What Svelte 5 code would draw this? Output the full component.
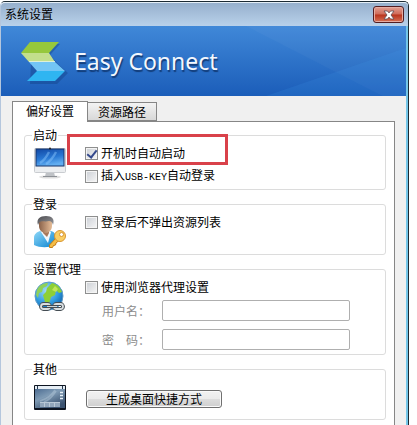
<script lang="ts">
	let tab = $state('prefs');
	let autoStart = $state(true);
	let usbLogin = $state(false);
	let hideList = $state(false);
	let useProxy = $state(false);
	let user = $state('');
	let password = $state('');
</script>

<div class="desktop">
	<main class="window">
		<header class="title-bar">
			<span>系统设置</span>
			<button class="close" aria-label="关闭">
				<svg width="12" height="10" viewBox="0 0 12 10">
					<path d="M1 1h3.4L6 2.9 7.6 1H11L8 5l3 4H7.6L6 7.1 4.4 9H1l3-4z" fill="#fff" stroke="#5e4a50" stroke-width="0.8" />
				</svg>
			</button>
		</header>

		<div class="banner">
			<svg class="rays" viewBox="0 0 405 70" preserveAspectRatio="none">
				<path d="M245 0L405 82V0z" fill="#fff" opacity="0.03" />
				<path d="M265 70L405 22V70z" fill="#4aa0f0" opacity="0.14" />
			</svg>
			<svg class="logo" width="48" height="42" viewBox="0 0 48 42">
				<path d="M12 2h28L30 13l7 8 11 10-11 11H10z" fill="#123f82" opacity="0.4" />
				<path d="M10 0h29L29 11H1z" fill="#96c83c" />
				<path d="M1 11h28l6 9H9z" fill="#c3df8c" />
				<path d="M9 20h26l10 9H17z" fill="#72c5f5" />
				<path d="M17 29h28L35 39H7z" fill="#2fb5f1" />
				<path d="M9 19.500h26" stroke="#e4f4ea" stroke-width="0.800" />
			</svg>
			<h1>Easy Connect</h1>
		</div>

		<div class="tabs" role="tablist">
			<button role="tab" class:active={tab === 'prefs'} aria-selected={tab === 'prefs'} onclick={() => (tab = 'prefs')}>偏好设置</button>
			<button role="tab" class:active={tab === 'paths'} aria-selected={tab === 'paths'} onclick={() => (tab = 'paths')}>资源路径</button>
		</div>

		<div class="panel">
			<fieldset>
				<legend>启动</legend>
				<div class="group startup">
					<svg class="icon" width="32" height="32" viewBox="0 0 32 32">
						<defs>
							<linearGradient id="screen" x1="0" y1="0" x2="0.3" y2="1">
								<stop offset="0" stop-color="#1248a4" />
								<stop offset="0.6" stop-color="#2878d4" />
								<stop offset="1" stop-color="#61adf0" />
							</linearGradient>
						</defs>
						<ellipse cx="16" cy="30" rx="11" ry="1.6" fill="#ddd" />
						<path d="M12 25h8l1 4.5H11z" fill="#bfc2c6" />
						<path d="M9 29.5h14" stroke="#8d9196" />
						<rect x="0.5" y="1.5" width="31" height="24" rx="1" fill="#eceef0" stroke="#c9ccd0" />
						<rect x="2" y="2" width="28" height="17" fill="url(#screen)" stroke="#17356b" />
						<path d="M6 16Q11 13 15 5M12 17Q18 13 22 5" stroke="#8ecaff" stroke-width="2.4" fill="none" opacity="0.45" />
						<circle cx="16" cy="1.5" r="1" fill="#222" />
					</svg>
					<div class="options">
						<label><input type="checkbox" bind:checked={autoStart} />开机时自动启动</label>
						<label><input type="checkbox" bind:checked={usbLogin} /><span>插入<span class="latin">USB-KEY</span>自动登录</span></label>
					</div>
					<div class="highlight"></div>
				</div>
			</fieldset>

			<fieldset>
				<legend>登录</legend>
				<div class="group login">
					<svg class="icon" width="32" height="32" viewBox="0 0 32 32">
						<defs>
							<linearGradient id="shirt" x1="0" y1="0" x2="1" y2="1">
								<stop offset="0" stop-color="#8fd8f8" />
								<stop offset="1" stop-color="#0a83d0" />
							</linearGradient>
							<linearGradient id="face" x1="0" y1="0" x2="1" y2="0">
								<stop offset="0" stop-color="#8a624a" />
								<stop offset="1" stop-color="#e6bd98" />
							</linearGradient>
							<linearGradient id="hair" x1="0" y1="0" x2="1" y2="1">
								<stop offset="0" stop-color="#4b4b50" />
								<stop offset="1" stop-color="#99999c" />
							</linearGradient>
						</defs>
						<path d="M0 29V22c0-4 3-6 6-7l6 3 5-3c4 1 5 4 5 8l-1 6c-6 3-15 3-21 0z" fill="url(#shirt)" />
						<path d="M7 16l5-1 5 1-3 11z" fill="#f2f7fb" />
						<path d="M9 13h6v4l-2 4-4-4z" fill="#a8785a" />
						<path d="M5 6c0-3 13-3 13 0v4c0 4-3 7-6.500 7S5 14 5 10z" fill="url(#face)" />
						<path d="M4 9C2 3 6 0 12 0s9 3 7 9c-1-3-2-4-4-4-3 1-6 0-8 .5C5 6 5 7 4 9z" fill="url(#hair)" />
						<path d="M22.500 21.500l-7 7.500v2.500h3l1-2 2-.5.5-2 3-2.500" fill="#f6bd45" stroke="#c77f16" />
						<circle cx="26" cy="20" r="5.500" fill="#fbcf63" stroke="#d99632" />
						<circle cx="27.500" cy="18.500" r="2" fill="#fff" stroke="#d99632" />
					</svg>
					<div class="options">
						<label><input type="checkbox" bind:checked={hideList} />登录后不弹出资源列表</label>
					</div>
				</div>
			</fieldset>

			<fieldset>
				<legend>设置代理</legend>
				<div class="group proxy">
					<svg class="icon" width="32" height="32" viewBox="0 0 32 32">
						<defs>
							<radialGradient id="globe" cx="0.4" cy="0.3" r="0.75">
								<stop offset="0" stop-color="#a2daf8" />
								<stop offset="0.6" stop-color="#2f9be0" />
								<stop offset="1" stop-color="#0d5aa5" />
							</radialGradient>
						</defs>
						<circle cx="15" cy="15" r="14" fill="url(#globe)" stroke="#5e9bc8" />
						<path d="M3 9C5 4 10 2 14 2l-1 3-4 2-1 4-3 1-1 5-2-3z" fill="#8fd15a" />
						<path d="M13 7l5-5c5 1 8 4 10 9l-3 1-3-3-1 5-4 2-2 7-4-2-2-7 3-3z" fill="#8ecf36" />
						<path d="M18 9l3-4 3 3-2 3z" fill="#c0e65a" />
						<g fill="none" stroke="#444c52" stroke-width="3.800">
							<rect x="7" y="23" width="9" height="5" rx="2.500" />
							<rect x="20" y="23" width="9" height="5" rx="2.500" />
						</g>
						<g fill="none" stroke="#d9dee1" stroke-width="1.800">
							<rect x="7" y="23" width="9" height="5" rx="2.500" />
							<rect x="20" y="23" width="9" height="5" rx="2.500" />
						</g>
						<path d="M13 25.500h10" stroke="#444c52" stroke-width="3" />
						<path d="M13 25.500h10" stroke="#cfd5d8" />
					</svg>
					<div class="options">
						<label><input type="checkbox" bind:checked={useProxy} />使用浏览器代理设置</label>
						<div class="field">
							<label for="user">用户名：</label>
							<input id="user" type="text" bind:value={user} disabled={!useProxy} />
						</div>
						<div class="field">
							<label for="password">密　码：</label>
							<input id="password" type="password" bind:value={password} disabled={!useProxy} />
						</div>
					</div>
				</div>
			</fieldset>

			<fieldset>
				<legend>其他</legend>
				<div class="group other">
					<svg class="icon" width="32" height="25" viewBox="0 0 32 25">
						<defs>
							<linearGradient id="desk" x1="0" y1="0" x2="0.6" y2="1">
								<stop offset="0" stop-color="#3f6088" />
								<stop offset="0.5" stop-color="#7f9bb5" />
								<stop offset="1" stop-color="#3a5270" />
							</linearGradient>
						</defs>
						<rect width="32" height="25" rx="1" fill="#0d1420" />
						<rect x="1" y="1" width="30" height="22" fill="url(#desk)" />
						<path d="M1 2.500h30" stroke="#e6eef5" stroke-width="3" />
						<path d="M3.500 1v3M28.500 1v3" stroke="#26384e" />
						<path d="M6 16C13 14 18 10 21 5M10 17c5-2 9-6 12-11" stroke="#b8cbdc" stroke-width="1.500" fill="none" opacity="0.45" />
						<path d="M26 7.500h3M26 10.500h3M26 13.500h3" stroke="#e8f0f6" stroke-width="1.600" />
						<path d="M6 17h20v5H6z" fill="#92a6bb" />
						<path d="M6 17.500h20M10.500 18v4M15.500 18v4M20.500 18v4" stroke="#b9c8d6" />
					</svg>
					<button class="shortcut">生成桌面快捷方式</button>
				</div>
			</fieldset>
		</div>
	</main>
</div>

<style>
	:global(body) {
		margin: 0;
		background: #fff;
	}

	.desktop,
	.desktop * {
		box-sizing: border-box;
	}

	.desktop {
		display: flex;
		min-height: 100vh;
		padding: 1px 8px 0 0;
		font-family: 'Noto Sans CJK SC', sans-serif;
		font-size: 12px;
		line-height: 16px;
		color: #000;
	}

	.window {
		flex: 1;
		display: flex;
		flex-direction: column;
		border: 1px solid #1b2a33;
		border-left-color: #b4c6dd;
		border-bottom: 0;
		border-radius: 5px 5px 0 0;
		box-shadow: inset -2px 0 #74c6e8;
		background: #f0f0f0;
		padding-right: 2px;
	}

	button,
	input {
		margin: 0;
		font: inherit;
		color: inherit;
	}

	.title-bar {
		display: flex;
		justify-content: space-between;
		height: 24px;
		margin-right: -2px;
		padding: 3px 4px 0;
		border-top: 1px solid #e4eef6;
		border-radius: 4px 4px 0 0;
		background: linear-gradient(#96b0cd, #b9d1ea);
	}

	.close {
		display: flex;
		align-items: center;
		justify-content: center;
		width: 31px;
		height: 17px;
		padding: 0;
		border: 1px solid #521d22;
		border-radius: 3px;
		background: linear-gradient(#e2a093, #cf6a58 48%, #b8331c 52%, #d67156);
		box-shadow: inset 0 0 0 1px #e6aca2;
	}

	.banner {
		position: relative;
		display: flex;
		align-items: center;
		gap: 6px;
		height: 70px;
		padding-left: 19px;
		background: linear-gradient(#4088d8, #1b5db9);
	}

	.rays {
		position: absolute;
		inset: 0;
		width: 100%;
		height: 100%;
	}

	.logo {
		position: relative;
		margin-top: 4px;
	}

	h1 {
		position: relative;
		margin: 0;
		font: 400 23px/32px 'Noto Sans', sans-serif;
		color: #f4f8fd;
		text-shadow: 1px 2px 1px #123c78;
	}

	.tabs {
		display: flex;
		align-items: flex-end;
		height: 25px;
		padding-left: 11px;
	}

	.tabs button {
		width: 69px;
		height: 19px;
		padding: 0;
		border: 1px solid #868686;
		border-left: 0;
		background: linear-gradient(#f3f3f3, #d8d8d8);
	}

	.tabs button.active {
		position: relative;
		width: 76px;
		height: 21px;
		margin-bottom: -1px;
		padding: 0 0 2px;
		border-left: 1px solid #868686;
		border-bottom: 0;
		background: #fff;
	}

	.panel {
		flex: 1;
		display: flex;
		flex-direction: column;
		gap: 6px;
		margin: 0 11px;
		padding: 5px 8px 0 11px;
		border: 1px solid #868686;
		border-bottom: 0;
		background: #fff;
	}

	fieldset {
		min-width: 0;
		margin: 0;
		padding: 0 0 0 9px;
		border: 1px solid #dcdcdc;
		border-radius: 3px;
	}

	legend {
		margin-left: -2px;
		padding: 0 1px;
	}

	.group {
		position: relative;
		display: flex;
		align-items: flex-start;
		gap: 19px;
	}

	.startup {
		height: 46px;
	}

	.login {
		height: 42px;
	}

	.proxy {
		height: 77px;
	}

	.other {
		height: 42px;
		gap: 20px;
	}

	.icon {
		flex: none;
		margin-top: 4px;
	}

	.other .icon {
		margin-top: 8px;
	}

	.options {
		flex: 1;
		display: flex;
		flex-direction: column;
		gap: 3px;
	}

	.options > label {
		display: flex;
		align-items: center;
		gap: 3px;
		height: 20px;
	}

	.latin {
		font: 10px/16px 'Liberation Mono', monospace;
	}

	input[type='checkbox'] {
		appearance: none;
		display: grid;
		place-items: center;
		width: 13px;
		height: 13px;
		border: 1px solid #8e8f8f;
		background: linear-gradient(135deg, #cbcfd5, #f6f6f6);
		box-shadow: inset 0 0 0 1px #f4f4f4;
	}

	input[type='checkbox']:checked::before {
		content: '';
		width: 4px;
		height: 8px;
		margin-bottom: 2px;
		border: solid #34498c;
		border-width: 0 2px 2px 0;
		transform: rotate(38deg);
	}

	.field {
		display: flex;
		align-items: center;
		height: 21px;
		margin-bottom: 5px;
		padding: 0 35px 0 17px;
		color: #8c8c8c;
	}

	.field label {
		flex: none;
		width: 60px;
	}

	.field input {
		flex: 1;
		min-width: 0;
		height: 21px;
		padding: 0 4px;
		border: 1px solid #afafaf;
		border-radius: 2px;
		background: #fff;
	}

	.highlight {
		position: absolute;
		top: -9px;
		left: 33px;
		width: 161px;
		height: 31px;
		border: 3px solid #d9414a;
		pointer-events: none;
	}

	.shortcut {
		width: 136px;
		height: 18px;
		margin-top: 13px;
		padding: 0;
		border: 1px solid #707070;
		border-radius: 3px;
		background: linear-gradient(#f2f2f2, #ebebeb 50%, #dddddd 50%, #cfcfcf);
		box-shadow: inset 0 0 0 1px #fafafa;
		line-height: 14px;
	}
</style>
